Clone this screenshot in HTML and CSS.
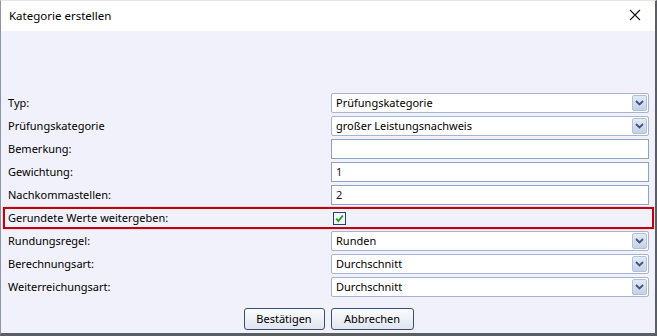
FILE: index.html
```html
<!DOCTYPE html>
<html lang="de">
<head>
<meta charset="utf-8">
<title>Kategorie erstellen</title>
<link rel="stylesheet" href="styles.css">
</head>
<body>
<div class="window">
  <div class="titlebar">
    <span class="title">Kategorie erstellen</span>
    <svg class="close" width="12" height="12" viewBox="0 0 12 12"><path d="M1 1L11 11M11 1L1 11" stroke="#111" stroke-width="1.1" fill="none"/></svg>
  </div>
  <div class="content">
    <div class="form">
      <div class="row"><span class="label">Typ:</span><div class="select"><span class="val">Prüfungskategorie</span><span class="dd"><svg width="9" height="6" viewBox="0 0 9 6"><path d="M1 1L4.5 4.5L8 1" stroke="#3f557d" stroke-width="1.8" fill="none"/></svg></span></div></div>
      <div class="row"><span class="label">Prüfungskategorie</span><div class="select"><span class="val">großer Leistungsnachweis</span><span class="dd"><svg width="9" height="6" viewBox="0 0 9 6"><path d="M1 1L4.5 4.5L8 1" stroke="#3f557d" stroke-width="1.8" fill="none"/></svg></span></div></div>
      <div class="row"><span class="label">Bemerkung:</span><div class="input"></div></div>
      <div class="row"><span class="label">Gewichtung:</span><div class="input">1</div></div>
      <div class="row"><span class="label">Nachkommastellen:</span><div class="input">2</div></div>
      <div class="row highlight"><span class="label">Gerundete Werte weitergeben:</span><div class="checkcell"><span class="checkbox"><svg width="9" height="9" viewBox="0 0 9 9"><path d="M1.2 4.6L3.5 7L7.8 1.5" stroke="#1fa22a" stroke-width="1.9" fill="none"/></svg></span></div></div>
      <div class="row"><span class="label">Rundungsregel:</span><div class="select"><span class="val">Runden</span><span class="dd"><svg width="9" height="6" viewBox="0 0 9 6"><path d="M1 1L4.5 4.5L8 1" stroke="#3f557d" stroke-width="1.8" fill="none"/></svg></span></div></div>
      <div class="row"><span class="label">Berechnungsart:</span><div class="select"><span class="val">Durchschnitt</span><span class="dd"><svg width="9" height="6" viewBox="0 0 9 6"><path d="M1 1L4.5 4.5L8 1" stroke="#3f557d" stroke-width="1.8" fill="none"/></svg></span></div></div>
      <div class="row"><span class="label">Weiterreichungsart:</span><div class="select"><span class="val">Durchschnitt</span><span class="dd"><svg width="9" height="6" viewBox="0 0 9 6"><path d="M1 1L4.5 4.5L8 1" stroke="#3f557d" stroke-width="1.8" fill="none"/></svg></span></div></div>
    </div>
    <div class="buttons">
      <button class="btn b1">Bestätigen</button>
      <button class="btn b2">Abbrechen</button>
    </div>
  </div>
</div>
</body>
</html>
```

FILE: styles.css
```css
html, body {
  margin: 0;
  padding: 0;
  background: #f1f1fb;
}
body {
  font-family: "Noto Sans", "Open Sans", sans-serif;
  font-size: 11px;
  color: #000;
}
.window {
  width: 657px;
  height: 336px;
  box-sizing: border-box;
  border-left: 1px solid #8a96a6;
  border-right: 2px solid #5a5f66;
  border-bottom: 3px solid #5a5f66;
  border-top: 1px solid #e6e6e6;
  background: #f1f1fb;
  display: flex;
  flex-direction: column;
}
.titlebar {
  height: 30px;
  background: #fff;
  display: flex;
  align-items: center;
  justify-content: space-between;
  padding: 0 14px 0 8px;
  flex-shrink: 0;
}
.title {
  font-size: 11.5px;
  color: #000;
  margin-top: -2px;
}
.close {
  margin-top: -2px;
}
.content {
  display: flex;
  flex-direction: column;
  padding: 62px 5px 0 7px;
}
.form {
  display: flex;
  flex-direction: column;
  gap: 3px;
}
.row {
  display: flex;
  align-items: center;
  height: 20px;
  position: relative;
}
.label {
  width: 323px;
  flex-shrink: 0;
  line-height: 20px;
  white-space: nowrap;
}
.select, .input {
  width: 318px;
  height: 20px;
  box-sizing: border-box;
  background: #fff;
  display: flex;
  align-items: center;
  justify-content: space-between;
  padding-left: 4px;
  line-height: 18px;
  white-space: nowrap;
}
.select {
  border: 1px solid #a7b4cb;
  border-radius: 2px;
  padding-right: 1px;
}
.input {
  border: 1px solid #8ea3c2;
  color: #2a0a30;
}
.dd {
  width: 15px;
  height: 16px;
  box-sizing: border-box;
  border: 1px solid #b2c0d8;
  border-radius: 2px;
  background: linear-gradient(#e4ebf6, #c3d1e9);
  display: flex;
  align-items: center;
  justify-content: center;
}
.checkcell {
  width: 318px;
  height: 20px;
  display: flex;
  align-items: center;
  padding-left: 2px;
}
.checkbox {
  width: 13px;
  height: 13px;
  box-sizing: border-box;
  border: 1px solid #23407a;
  background: #f4f6fb;
  display: flex;
  align-items: center;
  justify-content: center;
}
.highlight::after {
  content: "";
  position: absolute;
  left: -5px;
  right: -4px;
  top: -1px;
  bottom: -1px;
  border: 2px solid #c4000c;
  box-shadow: 0 0 1px rgba(120, 0, 0, 0.5);
  pointer-events: none;
}
.buttons {
  display: flex;
  justify-content: center;
  gap: 6px;
  margin-top: 11px;
  padding-right: 1px;
}
.btn {
  height: 22px;
  box-sizing: border-box;
  border: 1px solid #3b4f73;
  border-radius: 3px;
  background: linear-gradient(#fbfcfe, #dfe4ee);
  font-family: "Noto Sans", "Open Sans", sans-serif;
  font-size: 11px;
  color: #000;
  padding: 0;
  line-height: 18px;
}
.b1 { width: 81px; }
.b2 { width: 83px; }
```
